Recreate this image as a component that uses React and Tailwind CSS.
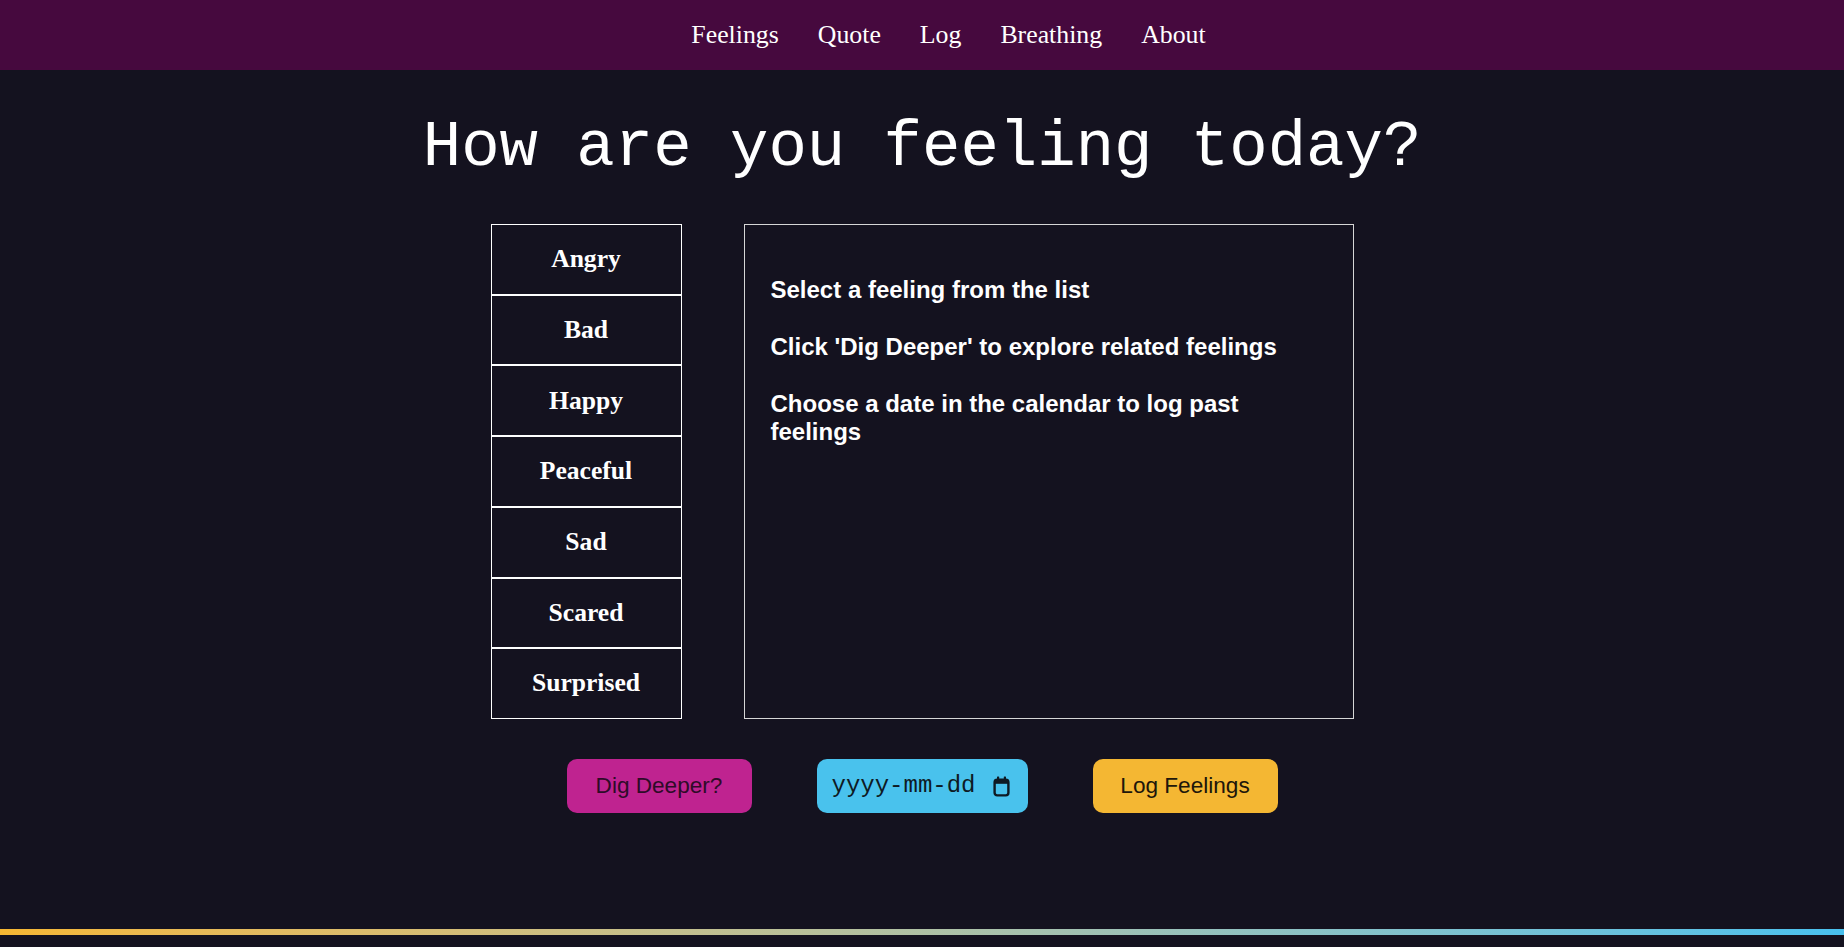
import { useState } from 'react'

/* ─── Data ──────────────────────────────────────────────────────── */
const NAV_LINKS = ['Feelings', 'Quote', 'Log', 'Breathing', 'About']
const FEELINGS = ['Angry', 'Bad', 'Happy', 'Peaceful', 'Sad', 'Scared', 'Surprised']
const TIPS = [
  'Select a feeling from the list',
  "Click 'Dig Deeper' to explore related feelings",
  'Choose a date in the calendar to log past feelings',
]

/* ─── Calendar glyph ────────────────────────────────────────────── */
const CalendarIcon = () => (
  <svg width="17" height="21" viewBox="0 0 17 21" fill="none" className="shrink-0">
    <rect x="4" y="0.5" width="2.2" height="4" rx="0.6" fill="#0e1a24" />
    <rect x="10.8" y="0.5" width="2.2" height="4" rx="0.6" fill="#0e1a24" />
    <rect x="1.6" y="3.6" width="13.8" height="15.8" rx="2.6" stroke="#0e1a24" strokeWidth="2.4" />
    <rect x="1.6" y="3.6" width="13.8" height="4.2" fill="#0e1a24" />
  </svg>
)

/* ─── App ───────────────────────────────────────────────────────── */
export default function App() {
  const [selected, setSelected] = useState(null)

  return (
    <div className="h-screen overflow-hidden flex flex-col bg-[#14121f] text-white">
      {/* Nav */}
      <nav className="h-[70px] shrink-0 bg-[#46093e] flex items-center justify-center pl-[53px] gap-[39px] font-['Liberation_Serif',serif] text-[25.8px]">
        {NAV_LINKS.map(link => (
          <a key={link} href="#" className="text-white">{link}</a>
        ))}
      </nav>

      <main className="flex-1 flex flex-col items-center">
        <h1 className="mt-[46px] text-[64px] leading-none font-['Liberation_Mono',monospace]">
          How are you feeling today?
        </h1>

        <div className="mt-[44px] flex gap-[62px]">
          {/* Feelings list */}
          <ul className="w-[191px] h-[495px] flex flex-col font-['Liberation_Serif',serif] text-[25.6px] font-bold">
            {FEELINGS.map(f => (
              <li
                key={f}
                onClick={() => setSelected(f)}
                className={`flex-1 flex items-center justify-center border border-white cursor-pointer
                  ${selected === f ? 'bg-white/10' : ''}`}
              >
                {f}
              </li>
            ))}
          </ul>

          {/* Info panel */}
          <div className="w-[610px] h-[495px] border border-[#d6d6d6] px-[26px] pt-[51px] font-['Liberation_Sans',Arial,sans-serif] text-[24px] leading-[28px] font-bold flex flex-col gap-[29px]">
            {TIPS.map(t => <p key={t}>{t}</p>)}
          </div>
        </div>

        {/* Actions */}
        <div className="mt-[40px] flex gap-[65px] font-['Liberation_Sans',Arial,sans-serif]">
          <button className="w-[185px] h-[54px] rounded-[10px] bg-[#bf2390] text-[#2e0b28] text-[22.6px]">
            Dig Deeper?
          </button>
          <div className="w-[211px] h-[54px] rounded-[10px] bg-[#49c2ed] flex items-center pl-[15px] pr-[18px] justify-between">
            <span className="font-['Liberation_Mono',monospace] text-[24px] text-[#0e1a24]">yyyy-mm-dd</span>
            <CalendarIcon />
          </div>
          <button className="w-[185px] h-[54px] rounded-[10px] bg-[#f4b733] text-[#20160a] text-[22.6px]">
            Log Feelings
          </button>
        </div>
      </main>

      {/* Footer bar */}
      <footer className="shrink-0 pb-[12px]">
        <div className="h-[6px] bg-linear-to-r from-[#f6b732] to-[#48c0ee]" />
      </footer>
    </div>
  )
}
